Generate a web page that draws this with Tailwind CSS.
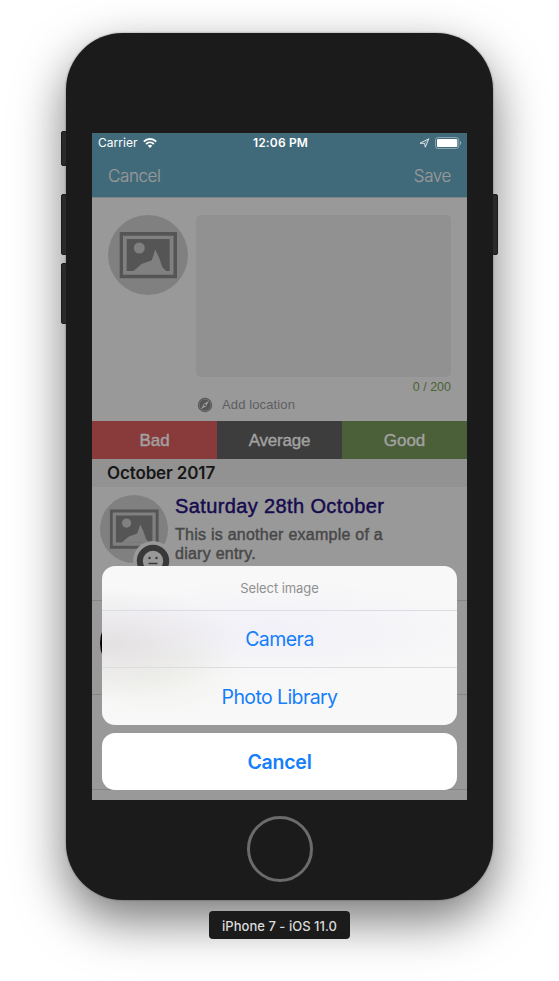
<!DOCTYPE html>
<html lang="en">
<head>
<meta charset="utf-8">
<title>Diary</title>
<script src="https://cdn.jsdelivr.net/npm/@tailwindcss/browser@4"></script>
</head>
<body class="bg-white font-['Inter','Liberation_Sans',sans-serif]">
<svg class="hidden">
  <symbol id="picture" viewBox="0 0 80 80">
    <circle cx="40" cy="40" r="40" fill="#808080"/>
    <path d="M11.700 17.100H69V63.200H11.700Z" fill="#555"/>
    <path d="M15 20.700H65.500V59.800H15Z" fill="#808080"/>
    <path d="M18.700 24H61.700V56H18.700Z" fill="#555"/>
    <circle cx="31.300" cy="33" r="5.500" fill="#808080"/>
    <path d="M25.300 56.200 33.500 49 43.800 45.300 47.300 34.800 51 42.500 54.500 52.500 58.500 56.200Z" fill="#808080"/>
  </symbol>
</svg>
<main class="relative flex h-[981px] w-[559px] flex-col items-center overflow-hidden pt-[33px]">
  <div class="relative h-[867px] w-[427px] shrink-0">
    <!-- Device body -->
    <div class="relative flex h-full w-full flex-col items-center rounded-[57px] bg-[#1b1b1b] pt-[100px] shadow-[0_0_2px_rgba(0,0,0,0.45),0_20px_50px_rgba(0,0,0,0.54)]">
      <div class="relative h-[667px] w-[375px] shrink-0 overflow-hidden bg-[#999]">
        <header class="h-[65px] border-b border-[#7d8586] bg-[#406a7a]">
          <div class="grid h-5 grid-cols-3 items-center pl-[6px] pr-[5px] text-[12px] text-white">
            <div class="flex items-center gap-[6px]"><span class="tracking-[0.02px]">Carrier</span>
              <svg class="h-[10px] w-[14px]" viewBox="0 0 14 10" fill="none" stroke="#fff"><path d="M.8 3.600C4.300.2 9.700.2 13.200 3.600" stroke-width="2"/><path d="M3.100 6C5.300 3.900 8.700 3.900 10.900 6" stroke-width="1.800"/><path d="M7 10 4.800 7.700Q7 5.900 9.200 7.700Z" fill="#fff" stroke="none"/></svg>
            </div>
            <span class="whitespace-nowrap pl-[1px] text-center font-semibold tracking-[0.17px]">12:06 PM</span>
            <div class="flex items-center justify-end gap-[5px]">
              <svg class="h-[10px] w-[11px]" viewBox="0 0 11 10" fill="none" stroke="#dce5e8"><path d="M1 5.200 9.800.8 6.300 9.200 5.600 5.400Z" stroke-width="1"/><path d="M5.600 5.400 9.800.8" stroke-width=".5"/></svg>
              <svg class="h-[12px] w-[27px]" viewBox="0 0 27 12"><rect x=".5" y=".5" width="23.300" height="11" rx="2.500" fill="none" stroke="#8ca6af"/><rect x="2" y="2" width="20.300" height="8" rx="1" fill="#fff"/><path d="M25 4C26.500 4.500 26.500 7.500 25 8Z" fill="#a0b5bd"/></svg>
            </div>
          </div>
          <div class="flex h-[44px] items-center justify-between px-4 pt-[3px] text-[17px] font-light tracking-[-0.4px] text-[#999] [-webkit-text-stroke:0.2px_currentColor]"><span>Cancel</span><span>Save</span></div>
        </header>
        <section class="flex h-[223px] gap-2 px-4 pt-[17px]">
          <svg class="h-20 w-20 shrink-0"><use href="#picture"/></svg>
          <div class="flex-1 font-['Liberation_Sans',sans-serif] text-[13px]">
            <div class="h-[162px] rounded-[5px] bg-[#919191]"></div>
            <div class="h-[20px] text-right text-[12.5px] leading-[20px] text-[#4b6232]">0 / 200</div>
            <div class="flex h-4 items-center gap-[9px] pl-[1px] text-[#5e5e5e]">
              <svg class="h-4 w-4" viewBox="0 0 16 16"><circle cx="8" cy="8" r="7.200" fill="#555"/><circle cx="8" cy="8" r="5.900" fill="none" stroke="#777" stroke-width=".8"/><path d="M12 3.800 9.200 9.200 4 12.200 6.800 6.800Z" fill="#999"/><circle cx="8" cy="8" r="1" fill="#555"/></svg>
              <span class="tracking-[0.12px]">Add location</span>
            </div>
          </div>
        </section>
        <div class="grid h-[38px] grid-cols-3 font-['Liberation_Sans',sans-serif] text-[17px] text-[#a2a2a2] [-webkit-text-stroke:0.4px_currentColor]">
          <div class="flex items-center justify-center bg-[#893b3b] pt-[2px]">Bad</div>
          <div class="flex items-center justify-center bg-[#3d3d3d] pt-[2px] tracking-[-0.2px]">Average</div>
          <div class="flex items-center justify-center bg-[#4b5f38] pt-[2px]">Good</div>
        </div>
        <h2 class="flex h-[28px] items-center bg-[#929292] px-[15px] pt-[2px] text-[17px] font-semibold tracking-[-0.13px] text-[#171717]">October 2017</h2>
        <article class="flex h-[114px] gap-[7px] border-b border-[#858585] pl-2 pt-2 font-['Liberation_Sans',sans-serif]">
          <div class="relative h-[68px] w-[68px] shrink-0">
            <svg class="h-[68px] w-[68px]"><use href="#picture"/></svg>
            <svg class="absolute left-[33px] top-[46px] h-10 w-10" viewBox="0 0 40 40"><circle cx="20" cy="20" r="20" fill="#999"/><circle cx="20" cy="20" r="16.200" fill="#393939"/><circle cx="20" cy="20" r="10.200" fill="#999"/><circle cx="16.500" cy="17" r="1.200" fill="#393939"/><circle cx="23.500" cy="17" r="1.200" fill="#393939"/><path d="M15.500 22.500H24.500" stroke="#393939" stroke-width="1.500"/></svg>
          </div>
          <div>
            <h3 class="text-[20px] leading-[23px] tracking-[0.38px] text-[#150b4d] [-webkit-text-stroke:0.45px_currentColor]">Saturday 28th October</h3>
            <p class="mt-[7px] w-[240px] text-[16px] leading-[19px] tracking-[0.25px] text-[#484848] [-webkit-text-stroke:0.45px_currentColor]">This is another example of a<br>diary entry.</p>
          </div>
        </article>
        <article class="h-[94px] border-b border-[#858585] pl-2 pt-2"><div class="h-[68px] w-[68px] rounded-full bg-black"></div></article>
        <div class="h-[95px] border-b border-[#858585]"></div>
        <!-- Action sheet -->
        <div class="absolute inset-x-[10px] bottom-[10px] flex flex-col gap-2 text-center text-[19.5px] text-[#147efb]">
          <div class="h-[159px] overflow-hidden rounded-[13px] bg-[#f8f8f8] bg-[radial-gradient(ellipse_130px_56px_at_10px_78px,rgba(222,218,220,0.75),transparent),radial-gradient(ellipse_90px_45px_at_55px_108px,rgba(236,239,230,0.6),transparent),radial-gradient(ellipse_220px_50px_at_170px_65px,rgba(240,239,248,0.85),transparent)]">
            <div class="flex h-[45px] items-center justify-center border-b border-[#dcdce5] pt-[2px] text-[13px] tracking-[-0.07px] text-[#8f8f8f]">Select image</div>
            <div class="flex h-[57px] items-center justify-center border-b border-[#deddde] pt-[1px] tracking-[-0.55px]">Camera</div>
            <div class="flex h-[57px] items-center justify-center pt-[2px] tracking-[-0.6px]">Photo Library</div>
          </div>
          <div class="flex h-[57px] items-center justify-center rounded-[13px] bg-white pt-[2px] font-semibold tracking-[-0.25px]">Cancel</div>
        </div>
      </div>
      <div class="mt-4 h-[66px] w-[66px] rounded-full border-[3px] border-[#6b6b6b]"></div>
    </div>
    <!-- Side buttons -->
    <div class="absolute -left-[5px] top-[98px] h-[35px] w-[6px] rounded-[2px] border border-[#1b1b1b] bg-[#2a2a2a]"></div>
    <div class="absolute -left-[5px] top-[161px] h-[61px] w-[6px] rounded-[2px] border border-[#1b1b1b] bg-[#2a2a2a]"></div>
    <div class="absolute -left-[5px] top-[230px] h-[61px] w-[6px] rounded-[2px] border border-[#1b1b1b] bg-[#2a2a2a]"></div>
    <div class="absolute -right-[5px] top-[161px] h-[61px] w-[6px] rounded-[2px] border border-[#1b1b1b] bg-[#2a2a2a]"></div>
  </div>
  <div class="relative mt-[11px] flex h-[28px] w-[141px] shrink-0 items-center justify-center rounded-[4px] bg-[#1b1b1b] pt-[4px] text-[13px] font-medium tracking-[0.02px] text-[#dcdcdc]">iPhone 7 - iOS 11.0</div>
</main>
</body>
</html>
